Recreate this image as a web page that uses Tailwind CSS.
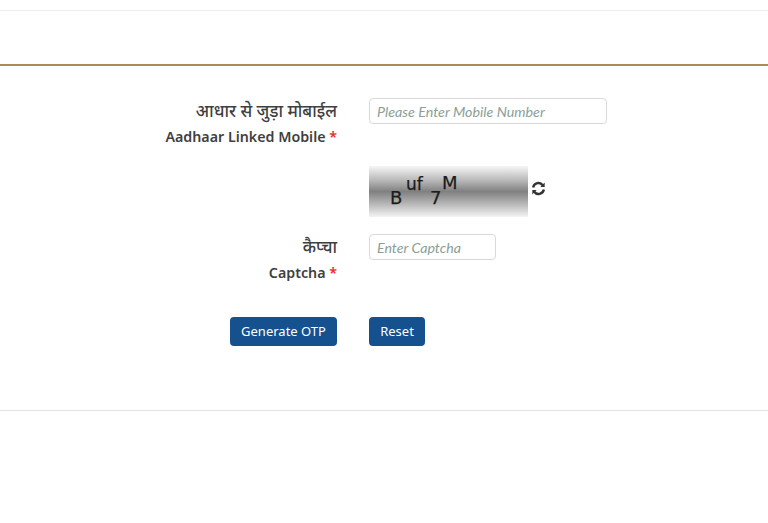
<!DOCTYPE html>
<html lang="hi">
<head>
<meta charset="utf-8">
<script src="https://cdn.jsdelivr.net/npm/@tailwindcss/browser@4"></script>
<title>Aadhaar Linked Mobile</title>
</head>
<body class="bg-white font-['Noto_Sans','Noto_Sans_Devanagari',sans-serif] text-[#3f3f3f]">
<div class="h-[523px] overflow-hidden">
  <div class="h-[11px] border-b border-[#ececec]"></div>
  <div class="h-[55px] border-b-2 border-[#ad8b55]"></div>
  <div class="h-[345px] border-b border-[#e4e4e4] pt-[32px] flex flex-col">
    <div class="flex gap-[32px] h-[68px]">
      <div class="w-[337px] text-right font-semibold">
        <div class="text-[16.9px] leading-[26px] font-medium">आधार से जुड़ा मोबाईल</div>
        <div class="text-[14.25px] leading-[26px]">Aadhaar Linked Mobile <span class="text-[#e8272c]">*</span></div>
      </div>
      <input placeholder="Please Enter Mobile Number" class="w-[238px] h-[26px] rounded-[4px] border border-[#d9d9d9] px-[7px] text-[14.3px] italic font-['Lato',sans-serif] placeholder:text-[#8aa097] outline-none">
    </div>
    <div class="flex gap-[32px] h-[68px]">
      <div class="w-[337px]"></div>
      <div class="flex items-center gap-[3px] h-[51px]">
        <div class="relative w-[159px] h-[51px] bg-[linear-gradient(to_bottom,#f6f6f6_0%,#b4b4b4_30%,#808080_50%,#a8a8a8_68%,#f4f4f4_100%)] font-['DejaVu_Sans',sans-serif] text-[#1c1c1c] [-webkit-text-stroke:0.25px_#1c1c1c]">
          <span class="absolute left-[21px] top-[21px] text-[18px] leading-[22px]">B</span>
          <span class="absolute left-[37px] top-[9px] text-[17px] leading-[18px]">uf</span>
          <span class="absolute left-[61px] top-[21px] text-[18px] leading-[22px]">7</span>
          <span class="absolute left-[73px] top-[6px] text-[18px] leading-[22px]">M</span>
        </div>
        <svg class="w-[15px] h-[15px] mt-[-6px]" viewBox="0 0 14 14" fill="none" stroke="#333" stroke-width="2.2">
          <path d="M2 6 A5 5 0 0 1 11 4"/>
          <path d="M12 8 A5 5 0 0 1 3 10"/>
          <path d="M12.8 1.5 V5.6 H8.7 Z" fill="#333" stroke="none"/>
          <path d="M1.2 12.5 V8.4 H5.3 Z" fill="#333" stroke="none"/>
        </svg>
      </div>
    </div>
    <div class="flex gap-[32px] h-[83px]">
      <div class="w-[337px] text-right font-semibold">
        <div class="text-[16.9px] leading-[26px] font-medium">कैप्चा</div>
        <div class="text-[14.25px] leading-[26px]">Captcha <span class="text-[#e8272c]">*</span></div>
      </div>
      <input placeholder="Enter Captcha" class="w-[127px] h-[26px] rounded-[4px] border border-[#d9d9d9] px-[7px] text-[14.2px] italic font-['Lato',sans-serif] placeholder:text-[#8aa097] outline-none">
    </div>
    <div class="flex gap-[32px]">
      <div class="w-[337px] flex justify-end">
        <button class="w-[107px] h-[29px] rounded-[4px] bg-[#15508f] text-white text-[13px]">Generate OTP</button>
      </div>
      <button class="w-[56px] h-[29px] rounded-[4px] bg-[#15508f] text-white text-[13px]">Reset</button>
    </div>
  </div>
</div>
</body>
</html>
